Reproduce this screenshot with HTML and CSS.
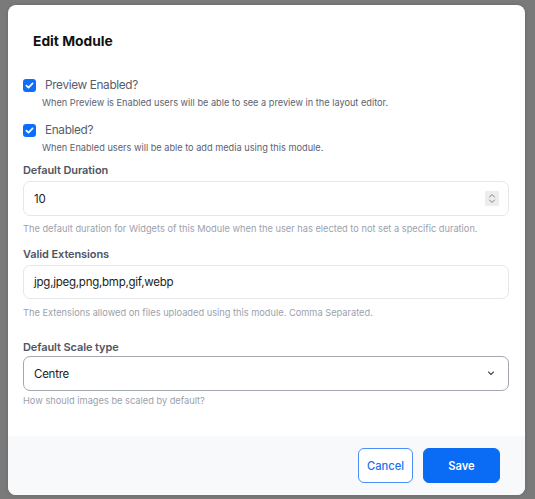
FILE: index.html
```html
<!DOCTYPE html>
<html lang="en">
<head>
<meta charset="utf-8">
<title>Edit Module</title>
<link rel="stylesheet" href="styles.css">
</head>
<body>
<div class="modal">
  <div class="modal-header">
    <h1 class="modal-title">Edit Module</h1>
  </div>
  <div class="modal-body">
    <div class="check-row first">
      <span class="checkbox"><svg viewBox="0 0 13 13" width="13" height="13"><path d="M3.4 6.7 L5.5 8.7 L9.6 4.4" fill="none" stroke="#fff" stroke-width="1.7" stroke-linecap="round" stroke-linejoin="round"/></svg></span>
      <span class="check-label">Preview Enabled?</span>
    </div>
    <div class="check-help">When Preview is Enabled users will be able to see a preview in the layout editor.</div>
    <div class="check-row second">
      <span class="checkbox"><svg viewBox="0 0 13 13" width="13" height="13"><path d="M3.4 6.7 L5.5 8.7 L9.6 4.4" fill="none" stroke="#fff" stroke-width="1.7" stroke-linecap="round" stroke-linejoin="round"/></svg></span>
      <span class="check-label">Enabled?</span>
    </div>
    <div class="check-help">When Enabled users will be able to add media using this module.</div>

    <div class="field-label lbl-duration">Default Duration</div>
    <div class="input number">
      <span class="value">10</span>
      <span class="spinner"><svg viewBox="0 0 14 15" width="14" height="15"><path d="M4.5 6 L7 3.5 L9.5 6 M4.5 9 L7 11.5 L9.5 9" fill="none" stroke="#7d828b" stroke-width="1" stroke-linecap="round" stroke-linejoin="round"/></svg></span>
    </div>
    <div class="field-help help-duration">The default duration for Widgets of this Module when the user has elected to not set a specific duration.</div>

    <div class="field-label lbl-ext">Valid Extensions</div>
    <div class="input ext">
      <span class="value">jpg,jpeg,png,bmp,gif,webp</span>
    </div>
    <div class="field-help help-ext">The Extensions allowed on files uploaded using this module. Comma Separated.</div>

    <div class="field-label lbl-scale">Default Scale type</div>
    <div class="input select">
      <span class="value">Centre</span>
      <svg class="chevron" viewBox="0 0 8 5" width="8" height="5"><path d="M1.5 1 L4 3.5 L6.5 1" fill="none" stroke="#4b5060" stroke-width="1.1" stroke-linecap="round" stroke-linejoin="round"/></svg>
    </div>
    <div class="field-help help-scale">How should images be scaled by default?</div>
  </div>
  <div class="modal-footer">
    <button class="btn btn-cancel">Cancel</button>
    <button class="btn btn-save">Save</button>
  </div>
</div>
</body>
</html>
```

FILE: styles.css
```css
html, body {
  margin: 0;
  padding: 0;
}
body {
  background: #7a7a7a;
  font-family: Inter, "Noto Sans", "Liberation Sans", sans-serif;
  padding: 5px 10px 0 8px;
  height: 499px;
  box-sizing: border-box;
  overflow: hidden;
}
.modal {
  background: #fff;
  border-radius: 8px;
  width: 517px;
  height: 490px;
  display: flex;
  flex-direction: column;
  overflow: hidden;
  box-shadow: 0 0 4px rgba(0,0,0,0.15);
}
.modal-header {
  padding: 26px 24px 0 25px;
}
.modal-title {
  margin: 0;
  font-size: 13.8px;
  line-height: 20px;
  font-weight: 700;
  color: #111;
}
.modal-body {
  padding: 0 16px 0 15px;
  flex: 1;
}
.check-row {
  display: flex;
  align-items: center;
  height: 18px;
}
.check-row.first { margin-top: 25px; }
.check-row.second { margin-top: 11px; }
.checkbox {
  width: 13px;
  height: 13px;
  background: #0d6efd;
  border-radius: 3px;
  display: flex;
  flex: none;
}
.check-label {
  margin-left: 9px;
  font-size: 11.8px;
  letter-spacing: -0.35px;
  color: #575d6b;
}
.check-help {
  margin-top: 2px;
  padding-left: 19px;
  font-size: 9.2px;
  line-height: 14px;
  color: #5b6270;
}
.field-label {
  font-size: 11px;
  line-height: 16px;
  font-weight: 600;
  letter-spacing: -0.1px;
  color: #4f5563;
}
.lbl-duration { margin-top: 7px; }
.lbl-ext { margin-top: 10px; }
.lbl-scale { margin-top: 19px; }
.input {
  margin-top: 3px;
  height: 35px;
  box-sizing: border-box;
  border: 1px solid #e3e6eb;
  border-radius: 7px;
  display: flex;
  align-items: center;
  padding: 0 9px 0 10px;
  font-size: 11.5px;
  letter-spacing: -0.25px;
  color: #1b1d22;
}
.input.ext { height: 34px; }
.input.select {
  margin-top: 1px;
  border-color: #a3a7b0;
  padding-left: 10px;
  padding-right: 13px;
}
.input .value { flex: 1; }
.spinner {
  width: 14px;
  height: 15px;
  background: #ededee;
  border-radius: 1px;
  display: flex;
}
.chevron { flex: none; }
.field-help {
  font-size: 9.25px;
  line-height: 14px;
  color: #9ba1ad;
}
.help-duration { margin-top: 6px; }
.help-ext { margin-top: 7px; }
.help-scale { margin-top: 3px; }
.modal-footer {
  background: #f8f9fb;
  height: 59px;
  box-sizing: border-box;
  padding: 12px 25px 12px 0;
  display: flex;
  justify-content: flex-end;
  gap: 10px;
}
.btn {
  height: 35px;
  border-radius: 6px;
  font-family: inherit;
  font-size: 11.2px;
  font-weight: 500;
  padding: 0;
  cursor: pointer;
}
.btn-cancel {
  width: 55px;
  background: #fff;
  border: 1px solid #4a8ff7;
  color: #1d6ff0;
}
.btn-save {
  width: 77px;
  background: #0a6cf5;
  border: 1px solid #0a6cf5;
  color: #fff;
  font-weight: 600;
}
```
